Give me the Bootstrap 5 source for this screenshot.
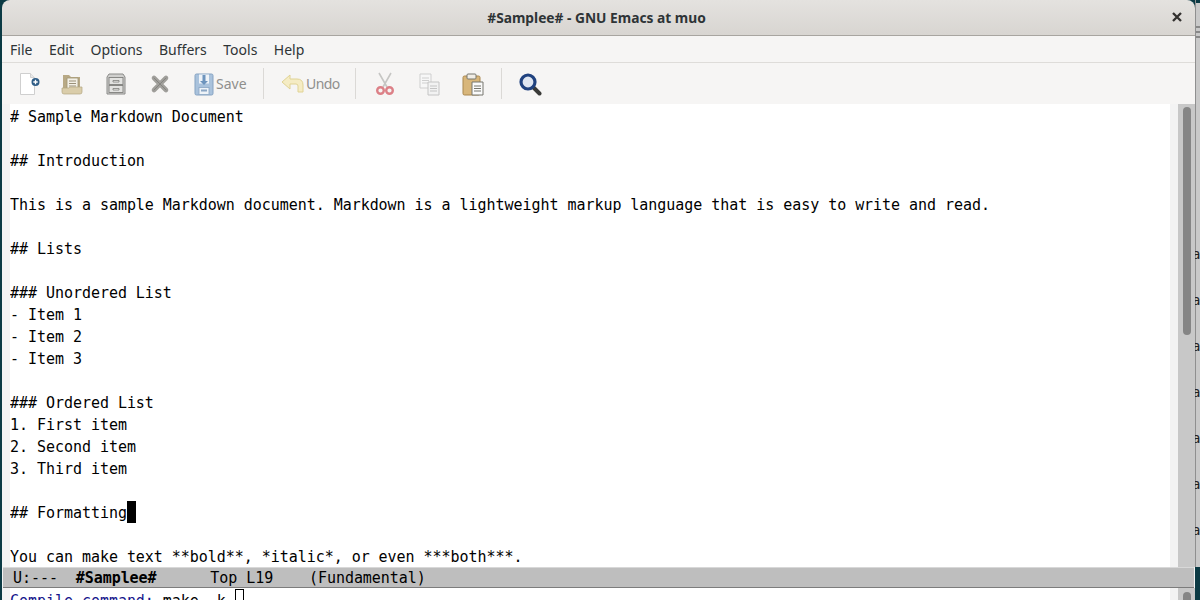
<!DOCTYPE html>
<html lang="en">
<head>
<meta charset="utf-8">
<title>#Samplee# - GNU Emacs at muo</title>
<link rel="stylesheet" href="https://cdn.jsdelivr.net/npm/bootstrap@5.3.0/dist/css/bootstrap.min.css">
<style>
html,body{height:600px;overflow:hidden;background:#0b3a44}
.desk{height:600px;width:1200px}
.edge-l{width:2px;background:#0b3a44}
.edge-r{width:5px;overflow:hidden}
.edge-top{height:567px;background:#c9c9c9;border-left:1px solid #8f8f8f;font:14px/46px "DejaVu Sans Mono",monospace;color:#222;text-indent:-4px}
.edge-top i{display:block;height:46px;font-style:normal}
.edge-bars{height:231px;background:linear-gradient(#0b3a44 3px,#c9c9c9 3px,#c9c9c9 26px,#888 26px,#888 28px,#c9c9c9 28px,#c9c9c9 31px,#888 31px,#888 33px,#c9c9c9 33px,#c9c9c9 36px,#888 36px,#888 38px,#c9c9c9 38px)}
.edge-low{height:33px;background:#0b3a44}
.win{width:1193px;height:600px;overflow:hidden;background:#0b3a44}
.ttl{height:36px;background:linear-gradient(#e4e2df,#d8d5d1);border-bottom:1px solid #a8a5a0;border-radius:8px 8px 0 0;position:relative;font:700 13.75px/35px "Noto Sans",sans-serif;color:#2e3436;text-align:center;padding-right:4px}
.ttl-x{position:absolute;right:12px;top:11px;display:block}
.mnu{height:27px;background:#f6f5f4;border-bottom:1px solid #dedcd9;padding:0 0 0 8px;gap:16.5px;font:14px/27px "Noto Sans",sans-serif;color:#2e3436}
.mnu span{display:block}
.tbar{height:41px;background:#f6f5f4;font:14px "Noto Sans",sans-serif}
.tb{display:flex;align-items:center;justify-content:center;flex:none;padding:0;border:0;border-radius:0;color:#8f8f8d;font:inherit}
.tb svg{flex:none}
.w54{width:54px}.w32{width:32px}.w56{width:56px}.w58{width:58px}.w30{width:30px}.w57{width:57px}
.tb-save{width:87px;padding-left:16px;justify-content:flex-start}
.tb-undo{width:91px;padding-left:16px;justify-content:flex-start}
.tb-undo span{margin-left:2px;letter-spacing:-.6px}
.sepv{width:1px;height:31px;background:#dbd9d6;flex:none}
.mid{height:463px;background:#f3f3f3}
.fring{width:8px;background:#f3f3f3}
.ed{width:1160px;background:#fff;padding-top:2px;font:15px/22px "DejaVu Sans Mono",monospace;letter-spacing:-.04px;color:#000;white-space:pre;overflow:hidden}
.ed div{height:22px}
.cur{display:inline-block;width:9px;height:22px;margin-top:-1px;background:#000;vertical-align:top}
.sbar{width:17px;background:#c8c8c8;padding:3px 4px 0 5px}
.thumb{height:228px;width:8px;background:#858585;border-radius:4px}
.modeline{height:21px;background:#bebebe;border-top:1px solid #d8d8d8;border-bottom:1px solid #7c7c7c;margin:0 1px;padding-left:10px;font:15px/20px "DejaVu Sans Mono",monospace;letter-spacing:-.06px;color:#000;white-space:pre}
.modeline-wrap{background:#f3f3f3}
.mini{height:12px;overflow:hidden;background:#f3f3f3}
.mini .ed{height:12px}
.prompt{color:#16168c}
.boxcur{display:inline-block;width:9px;height:22px;margin-top:-1px;border:1px solid #000;vertical-align:top}
.sbar-low{padding-top:0}
.thumb2{height:20px;margin-top:4px}
</style>
</head>
<body>
<div class="desk d-flex">
  <div class="edge-l"></div>
  <div class="win d-flex flex-column">
    <div class="ttl">#Samplee# - GNU Emacs at muo
      <svg class="ttl-x" width="12" height="12" viewBox="0 0 12 12"><path d="M2 2l8 8M10 2l-8 8" stroke="#33312f" stroke-width="2.3"/></svg>
    </div>
    <nav class="mnu d-flex">
      <span>File</span><span>Edit</span><span>Options</span><span>Buffers</span><span>Tools</span><span>Help</span>
    </nav>
    <div class="tbar d-flex align-items-center">
      <button class="btn tb w54" aria-label="New">
        <svg width="24" height="24" viewBox="0 0 24 24"><path d="M3.500 1.500h10l4 4v17h-14z" fill="#fff" stroke="#cfcfcf"/><path d="M13.500 1.500v4h4" fill="#e8e8e8" stroke="#d2d2d2"/><circle cx="18.500" cy="10" r="4" fill="#2f5d86"/><path d="M16.300 10h4.400M18.500 7.800v4.400" stroke="#fff" stroke-width="1.300"/></svg>
      </button>
      <button class="btn tb w32" aria-label="Open">
        <svg width="24" height="24" viewBox="0 0 24 24"><path d="M3 3h6l2 2h9v16H3z" fill="#b8a985"/><path d="M7 6h11v11H7z" fill="#f3f0e6" stroke="#a09474" stroke-width=".8"/><path d="M9 9h7M9 11.500h7M9 14h7" stroke="#9a9078" stroke-width="1"/><path d="M2 16h7l1-1h12v5q0 2-2 2H4q-2 0-2-2z" fill="#dacdaa" stroke="#b3a681" stroke-width=".7"/></svg>
      </button>
      <button class="btn tb w56" aria-label="Cabinet">
        <svg width="24" height="24" viewBox="0 0 24 24"><path d="M5 2h14l2 3v17H3V5z" fill="#d0d0ce" stroke="#8a8a88"/><rect x="5" y="5.500" width="14" height="7" fill="#e2e2e0" stroke="#7f7f7d" stroke-width=".9"/><rect x="5" y="13.500" width="14" height="7" fill="#e2e2e0" stroke="#7f7f7d" stroke-width=".9"/><path d="M9 8.500h6v1.500H9zM9 16.500h6v1.500H9z" fill="#f7f7f5" stroke="#6e6e6c" stroke-width=".7"/></svg>
      </button>
      <button class="btn tb w32" aria-label="Close">
        <svg width="24" height="24" viewBox="0 0 24 24"><path d="M6 6l12 12M18 6L6 18" stroke="#a09f9b" stroke-width="4.600" stroke-linecap="round"/><path d="M6 6l12 12M18 6L6 18" stroke="#6f6f6b" stroke-width="1" stroke-linecap="round" opacity=".55"/></svg>
      </button>
      <button class="btn tb tb-save" aria-label="Save">
        <svg width="24" height="24" viewBox="0 0 24 24"><rect x="3" y="2" width="18" height="21" rx="1.500" fill="#a9c2dc" stroke="#86a3c2"/><path d="M7 2.500h10v9H7z" fill="#eef3f8"/><path d="M10.500 3v6H8l4 4 4-4h-2.500V3z" fill="#6d94bd"/><rect x="7" y="15.500" width="10" height="7" fill="#eef3f8" stroke="#8aa6c4" stroke-width=".8"/><rect x="9" y="17.500" width="6" height="2" fill="#8aa6c4"/></svg>
        <span>Save</span>
      </button>
      <span class="sepv"></span>
      <button class="btn tb tb-undo" aria-label="Undo">
        <svg width="24" height="24" viewBox="0 0 24 24"><path d="M2 10l8-7v4h7q6 0 6 6v7h-5v-6q0-2-2-2h-6v5z" fill="#f5ecc4" stroke="#e0d394"/></svg>
        <span>Undo</span>
      </button>
      <span class="sepv"></span>
      <button class="btn tb w58" aria-label="Cut">
        <svg width="24" height="24" viewBox="0 0 24 24"><path d="M6 1l8 14M18 1l-8 14" stroke="#c6c6c4" stroke-width="1.600" fill="none"/><circle cx="7.500" cy="18.500" r="3.300" fill="none" stroke="#dc8087" stroke-width="2.400"/><circle cx="16.500" cy="18.500" r="3.300" fill="none" stroke="#dc8087" stroke-width="2.400"/></svg>
      </button>
      <button class="btn tb w30" aria-label="Copy">
        <svg width="24" height="24" viewBox="0 0 24 24"><path d="M3 2h11v14H3z" fill="#f7f7f7" stroke="#cfcfcf"/><path d="M5 6h7M5 8.500h7M5 11h7" stroke="#cfcfcf"/><path d="M11 10h11v13H11z" fill="#f2f2f2" stroke="#c4c4c4"/><path d="M13 14h7M13 16.500h7M13 19h7" stroke="#c4c4c4"/></svg>
      </button>
      <button class="btn tb w57" aria-label="Paste">
        <svg width="24" height="24" viewBox="0 0 24 24"><rect x="2" y="4" width="17" height="19" rx="1.500" fill="#d8b67a" stroke="#a9874e"/><rect x="6" y="2" width="9" height="5" rx="1" fill="#f0ede6" stroke="#77776f"/><path d="M11 10h11v13H11z" fill="#fafafa" stroke="#77776f"/><path d="M13 14h7M13 16.500h7M13 19h7" stroke="#77776f"/></svg>
      </button>
      <span class="sepv"></span>
      <button class="btn tb w56" aria-label="Search">
        <svg width="24" height="24" viewBox="0 0 24 24"><path d="M15 15l6.500 6.500" stroke="#3a3a38" stroke-width="4" stroke-linecap="round"/><circle cx="10" cy="10" r="7" fill="#dfe6f1" stroke="#20427f" stroke-width="3.200"/></svg>
      </button>
    </div>
    <div class="mid d-flex">
      <div class="fring"></div>
      <div class="ed"><div># Sample Markdown Document</div><div> </div><div>## Introduction</div><div> </div><div>This is a sample Markdown document. Markdown is a lightweight markup language that is easy to write and read.</div><div> </div><div>## Lists</div><div> </div><div>### Unordered List</div><div>- Item 1</div><div>- Item 2</div><div>- Item 3</div><div> </div><div>### Ordered List</div><div>1. First item</div><div>2. Second item</div><div>3. Third item</div><div> </div><div>## Formatting<span class="cur"></span></div><div> </div><div>You can make text **bold**, *italic*, or even ***both***.</div></div>
      <div class="fring"></div>
      <div class="sbar"><div class="thumb"></div></div>
    </div>
    <div class="modeline-wrap"><div class="modeline">U:---  <b>#Samplee#</b>      Top L19    (Fundamental)</div></div>
    <div class="mini d-flex">
      <div class="fring"></div>
      <div class="ed"><span class="prompt">Compile command:</span> make -k <span class="boxcur"></span></div>
      <div class="fring"></div>
      <div class="sbar sbar-low"><div class="thumb thumb2"></div></div>
    </div>
  </div>
  <div class="edge-r">
    <div class="edge-top">
      <div class="edge-bars"></div>
      <i>a</i><i>a</i><i>a</i><i>a</i><i>a</i><i>a</i><i>a</i>
    </div>
    <div class="edge-low"></div>
  </div>
</div>
<script src="https://cdn.jsdelivr.net/npm/bootstrap@5.3.0/dist/js/bootstrap.bundle.min.js"></script>
</body>
</html>
